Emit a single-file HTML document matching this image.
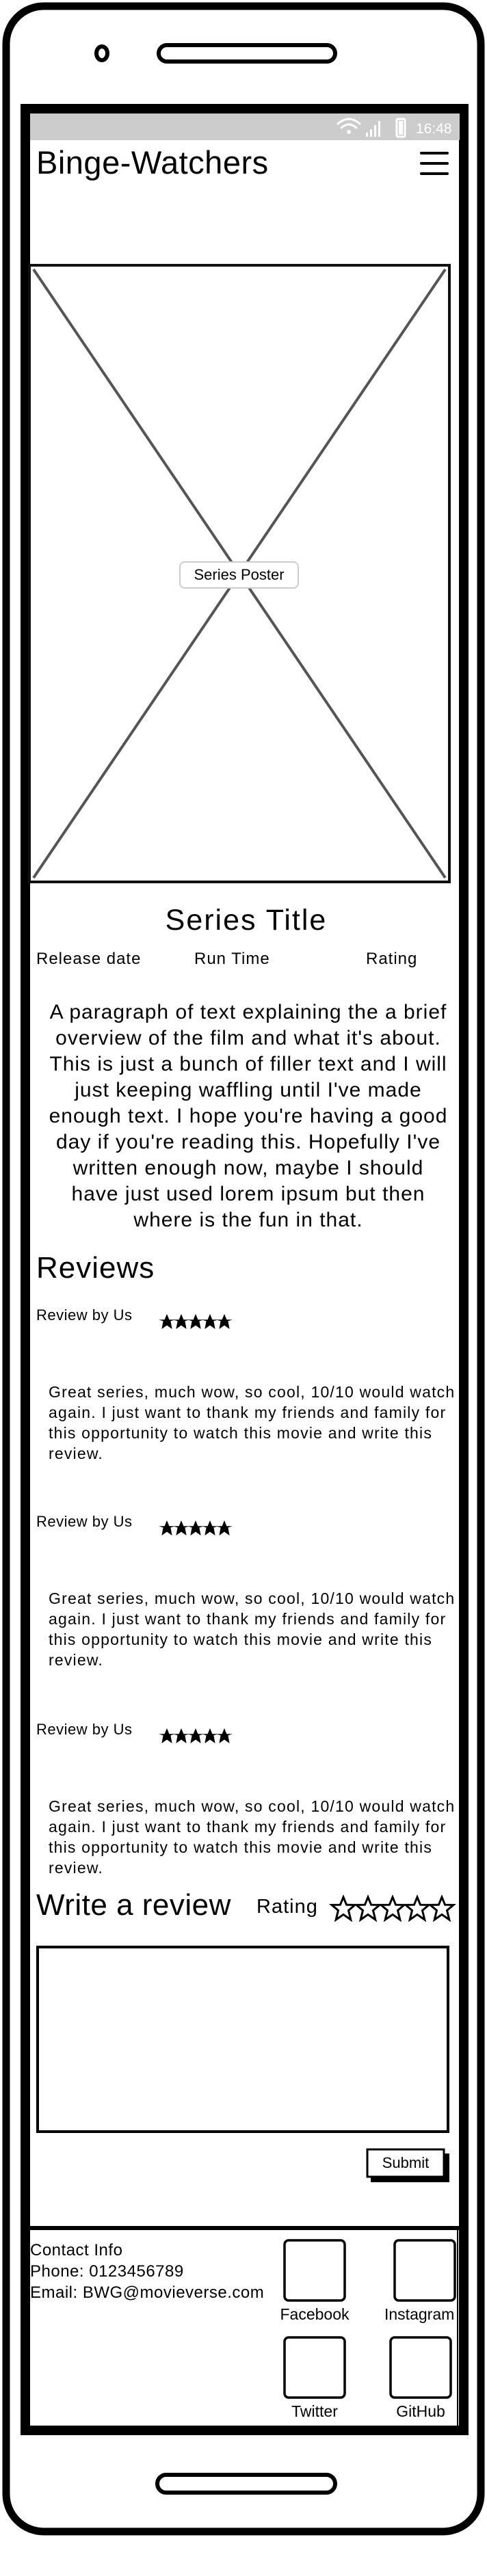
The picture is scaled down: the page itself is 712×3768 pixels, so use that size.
<!DOCTYPE html>
<html><head><meta charset="utf-8">
<style>
*{margin:0;padding:0;box-sizing:border-box}
html,body{width:712px;height:3768px;background:#fff;overflow:hidden}
body{position:relative;font-family:"Liberation Sans",sans-serif;color:#000}
.a{position:absolute;white-space:nowrap}
.rev{position:absolute;left:71px;font-size:23px;line-height:30px;letter-spacing:1.2px;white-space:nowrap}
</style></head><body>
<svg class="a" style="left:0;top:0" width="712" height="3768">
  <rect x="9" y="9" width="694" height="3694" rx="55" fill="none" stroke="#000" stroke-width="11"/>
  <ellipse cx="149" cy="78" rx="8" ry="10" fill="none" stroke="#000" stroke-width="6"/>
  <rect x="232" y="66" width="258" height="24" rx="12" fill="none" stroke="#000" stroke-width="6"/>
  <rect x="230" y="3620" width="260" height="26" rx="13" fill="none" stroke="#000" stroke-width="6"/>
  <rect x="37" y="159" width="641" height="3396" fill="none" stroke="#000" stroke-width="14"/>
  <rect x="44" y="166" width="628" height="39" fill="#ccc"/>
  <g fill="none" stroke="#fff" stroke-width="3" stroke-linecap="round">
    <path d="M494 181 Q510 167 526 181"/><path d="M499 187 Q510 177 521 187"/>
    <rect x="580" y="174" width="12" height="26" rx="2"/>
  </g>
  <circle cx="510" cy="193" r="3" fill="#fff"/>
  <g fill="#fff"><rect x="535" y="194" width="3" height="6"/><rect x="541" y="189" width="3" height="11"/><rect x="547" y="183" width="3" height="17"/><rect x="553" y="177" width="3" height="23"/><rect x="583" y="177" width="6" height="20"/></g>
  <text x="608" y="195" font-family="Liberation Sans" font-size="21" fill="#fff">16:48</text>
  <g stroke="#000" stroke-width="4" stroke-linecap="round"><path d="M616 224H654M616 239H654M616 254H654"/></g>
  <rect x="43" y="388" width="614" height="902" fill="none" stroke="#111" stroke-width="4"/>
  <path d="M49 394L651 1284M651 394L49 1284" stroke="#555" stroke-width="4"/>
  <rect x="55" y="2848" width="600" height="270" fill="none" stroke="#000" stroke-width="4"/>
  <rect x="542" y="3150" width="115" height="42" fill="#000"/>
  <rect x="537" y="3144" width="112" height="40" fill="#fff" stroke="#000" stroke-width="3"/>
  <line x1="44" y1="3259" x2="672" y2="3259" stroke="#000" stroke-width="6"/>
  <line x1="669" y1="3260" x2="669" y2="3548" stroke="#000" stroke-width="2"/>
  <g fill="none" stroke="#000" stroke-width="3.5">
    <rect x="416" y="3277" width="88" height="88" rx="6"/>
    <rect x="577" y="3277" width="88" height="88" rx="6"/>
    <rect x="416" y="3419" width="88" height="88" rx="6"/>
    <rect x="571" y="3419" width="88" height="88" rx="6"/>
  </g>
  <defs>
    <path id="st" d="M0-12L3.4-3.8 12-3.6 5.4-1.6 7.6 10 0 4.6-7.6 10-5.4-1.6-12-3.6-3.4-3.8Z"/>
    <path id="so" d="M0-17L4.6-5.8 17-5.6 7.5 2.4 10.8 16 0 8.4-10.8 16-7.5 2.4-17-5.6-4.6-5.8Z"/>
  </defs>
  <g fill="#000">
    <use href="#st" x="244" y="1934"/><use href="#st" x="265" y="1934"/><use href="#st" x="286" y="1934"/><use href="#st" x="307" y="1934"/><use href="#st" x="328" y="1934"/>
    <use href="#st" x="244" y="2236"/><use href="#st" x="265" y="2236"/><use href="#st" x="286" y="2236"/><use href="#st" x="307" y="2236"/><use href="#st" x="328" y="2236"/>
    <use href="#st" x="244" y="2540"/><use href="#st" x="265" y="2540"/><use href="#st" x="286" y="2540"/><use href="#st" x="307" y="2540"/><use href="#st" x="328" y="2540"/>
  </g>
  <g fill="#fff" stroke="#000" stroke-width="3">
    <use href="#so" x="502" y="2792"/><use href="#so" x="538" y="2792"/><use href="#so" x="574" y="2792"/><use href="#so" x="610" y="2792"/><use href="#so" x="646" y="2792"/>
  </g>
</svg>

<div class="a" style="left:53px;top:210px;font-size:47px;letter-spacing:0.5px">Binge-Watchers</div>

<div class="a" style="left:262px;top:821px;width:175px;height:40px;border:2px solid #ccc;border-radius:8px;background:#fff;font-size:22px;line-height:36px;text-align:center">Series Poster</div>

<div class="a" style="left:40px;width:640px;top:1322px;font-size:43px;letter-spacing:2px;text-align:center">Series Title</div>
<div class="a" style="left:53px;top:1389px;font-size:24px;letter-spacing:1px">Release date</div>
<div class="a" style="left:284px;top:1389px;font-size:24px;letter-spacing:1px">Run Time</div>
<div class="a" style="left:535px;top:1389px;font-size:24px;letter-spacing:1px">Rating</div>

<div class="a" style="left:33px;width:660px;top:1462px;font-size:30px;line-height:38px;letter-spacing:1px;text-align:center">A paragraph of text explaining the a brief<br>overview of the film and what it's about.<br>This is just a bunch of filler text and I will<br>just keeping waffling until I've made<br>enough text. I hope you're having a good<br>day if you're reading this. Hopefully I've<br>written enough now, maybe I should<br>have just used lorem ipsum but then<br>where is the fun in that.</div>

<div class="a" style="left:53px;top:1830px;font-size:44px;letter-spacing:1px">Reviews</div>

<div class="a" style="left:53px;top:1911px;font-size:22px;letter-spacing:0.5px">Review by Us</div>
<div class="rev" style="top:2021px">Great series, much wow, so cool, 10/10 would watch<br>again. I just want to thank my friends and family for<br>this opportunity to watch this movie and write this<br>review.</div>

<div class="a" style="left:53px;top:2213px;font-size:22px;letter-spacing:0.5px">Review by Us</div>
<div class="rev" style="top:2323px">Great series, much wow, so cool, 10/10 would watch<br>again. I just want to thank my friends and family for<br>this opportunity to watch this movie and write this<br>review.</div>

<div class="a" style="left:53px;top:2517px;font-size:22px;letter-spacing:0.5px">Review by Us</div>
<div class="rev" style="top:2627px">Great series, much wow, so cool, 10/10 would watch<br>again. I just want to thank my friends and family for<br>this opportunity to watch this movie and write this<br>review.</div>

<div class="a" style="left:53px;top:2762px;font-size:44px;letter-spacing:0.5px">Write a review</div>
<div class="a" style="left:375px;top:2773px;font-size:29px;letter-spacing:1px">Rating</div>

<div class="a" style="left:537px;top:3151px;width:112px;text-align:center;font-size:22px">Submit</div>

<div class="a" style="left:44px;top:3276px;font-size:24px;line-height:31px;letter-spacing:0.5px;overflow:hidden;width:380px">Contact Info<br>Phone: 0123456789<br>Email: BWG@movieverse.com</div>
<div class="a" style="left:400px;width:120px;top:3372px;text-align:center;font-size:23px">Facebook</div>
<div class="a" style="left:562px;width:107px;top:3372px;font-size:23px;overflow:hidden">Instagram</div>
<div class="a" style="left:400px;width:120px;top:3514px;text-align:center;font-size:23px">Twitter</div>
<div class="a" style="left:555px;width:120px;top:3514px;text-align:center;font-size:23px">GitHub</div>
</body></html>
